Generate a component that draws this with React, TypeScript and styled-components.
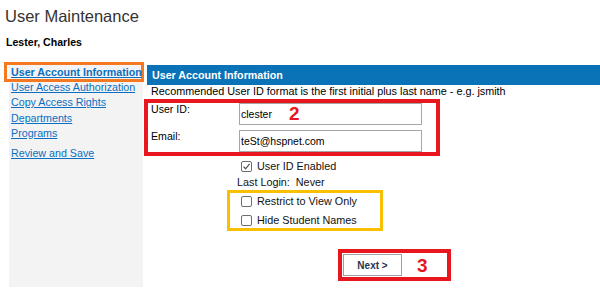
import React from "react";
import styled, { createGlobalStyle } from "styled-components";

const Global = createGlobalStyle`
  html, body { margin: 0; padding: 0; background: #fff; }
  body { font-family: "Liberation Sans", Arial, sans-serif; color: #000; }
`;

const Page = styled.div`
  display: flex;
  flex-direction: column;
`;

const Title = styled.h1`
  margin: 6px 0 0 5px;
  font-size: 16.5px;
  line-height: 20px;
  font-weight: normal;
  color: #333;
`;

const Name = styled.div`
  margin: 10px 0 0 6px;
  font-size: 10.6px;
  line-height: 13px;
  font-weight: bold;
`;

const Main = styled.div`
  display: flex;
  margin-top: 13px;
  min-height: 225px;
`;

const Sidebar = styled.nav`
  margin-left: 9px;
  width: 134px;
  background: #f3f3f3;
  display: flex;
  flex-direction: column;
`;

const NavLink = styled.a<{ $active?: boolean; $spaced?: boolean }>`
  display: block;
  color: #0b6fc1;
  text-decoration: underline;
  font-size: 10.7px;
  font-weight: ${(p) => (p.$active ? "bold" : "normal")};
  line-height: ${(p) => (p.$active ? "14px" : "15.3px")};
  padding-left: ${(p) => (p.$active ? "4px" : "2px")};
  margin: ${(p) => (p.$active ? "0 -1px -2px -5px" : p.$spaced ? "5px 0 0 0" : "0")};
  border: ${(p) => (p.$active ? "3px solid #f47920" : "none")};
  position: relative;
  white-space: nowrap;
  cursor: pointer;
`;

const Content = styled.section`
  flex: 1;
  margin: 3px 0 0 4px;
  display: flex;
  flex-direction: column;
  align-items: flex-start;
`;

const Header = styled.div`
  align-self: stretch;
  height: 20px;
  line-height: 20px;
  background: #0a73b8;
  color: #fff;
  font-weight: bold;
  font-size: 10.7px;
  padding-left: 5px;
`;

const Note = styled.div`
  font-size: 10.8px;
  line-height: 13px;
  padding-left: 4px;
`;

const Annot = styled.div<{ $color: string; $w?: number }>`
  position: relative;
  box-sizing: border-box;
  border: 4px solid ${(p) => p.$color};
  ${(p) => (p.$w ? `width: ${p.$w}px;` : "")}
`;

const FieldBox = styled(Annot)`
  margin: 1px 0 0 -3px;
  display: flex;
  flex-direction: column;
  gap: 5px;
`;

const FieldRow = styled.div`
  display: flex;
  align-items: flex-start;
`;

const Label = styled.label`
  width: 91px;
  box-sizing: border-box;
  padding-left: 3px;
  font-size: 10.6px;
  line-height: 13px;
`;

const Input = styled.input`
  box-sizing: border-box;
  width: 183px;
  height: 22px;
  border: 1px solid #a6a6a6;
  padding: 0 0 0 1px;
  font-family: "Liberation Sans", Arial, sans-serif;
  font-size: 10.5px;
  color: #000;
  outline: none;
`;

const Marker = styled.span<{ $left?: number; $top?: number }>`
  color: #e8171f;
  font-weight: bold;
  font-size: 19px;
  line-height: 19px;
  ${(p) =>
    p.$left !== undefined
      ? `position: absolute; left: ${p.$left}px; top: ${p.$top}px;`
      : ""}
`;

const Options = styled.div`
  margin-left: 90px;
  display: flex;
  flex-direction: column;
  align-items: flex-start;
`;

const CheckRow = styled.div<{ $mt?: number }>`
  display: flex;
  align-items: center;
  height: 16px;
  padding-left: 4px;
  margin-top: ${(p) => p.$mt ?? 0}px;
  font-size: 10.8px;
  color: #111;
  white-space: nowrap;
`;

const Box = styled.span`
  box-sizing: border-box;
  width: 11px;
  height: 11px;
  border: 1px solid #6d6d6d;
  border-radius: 2px;
  background: #fff;
  margin-right: 5px;
  display: flex;
  align-items: center;
  justify-content: center;
`;

const LastLogin = styled.div`
  margin-top: 2px;
  font-size: 10.8px;
  line-height: 13px;
  white-space: pre;
  color: #111;
`;

const OptBox = styled(Annot)`
  border-width: 3px;
  margin: 1px 0 0 -10px;
  padding-left: 7px;
  display: flex;
  flex-direction: column;
  gap: 3px;
`;

const Footer = styled(Annot)`
  margin: 18px 0 0 191px;
  padding: 1px 19px 1px 1px;
  display: flex;
  align-items: center;
  gap: 15px;
`;

const Button = styled.button`
  box-sizing: border-box;
  width: 59px;
  height: 22px;
  border: 1px solid #a0a0a0;
  background: #fff;
  font-family: "Liberation Sans", Arial, sans-serif;
  font-weight: bold;
  font-size: 10px;
  color: #1e3550;
  padding: 0;
  cursor: pointer;
`;

const Check = ({ checked }: { checked?: boolean }) => (
  <Box>
    {checked && (
      <svg width="9" height="9" viewBox="0 0 9 9">
        <path d="M1.5 4.6 L3.6 6.8 L7.6 1.8" fill="none" stroke="#5a5a5a" strokeWidth="1.3" />
      </svg>
    )}
  </Box>
);

export default function App() {
  return (
    <Page>
      <Global />
      <Title>User Maintenance</Title>
      <Name>Lester, Charles</Name>
      <Main>
        <Sidebar>
          <NavLink $active>User Account Information</NavLink>
          <NavLink>User Access Authorization</NavLink>
          <NavLink>Copy Access Rights</NavLink>
          <NavLink>Departments</NavLink>
          <NavLink>Programs</NavLink>
          <NavLink $spaced>Review and Save</NavLink>
        </Sidebar>
        <Content>
          <Header>User Account Information</Header>
          <Note>Recommended User ID format is the first initial plus last name - e.g. jsmith</Note>
          <FieldBox $color="#e8171f" $w={296}>
            <FieldRow>
              <Label>User ID:</Label>
              <Input defaultValue="clester" />
            </FieldRow>
            <FieldRow>
              <Label>Email:</Label>
              <Input defaultValue="teSt@hspnet.com" />
            </FieldRow>
            <Marker $left={141} $top={1}>2</Marker>
          </FieldBox>
          <Options>
            <CheckRow $mt={2}>
              <Check checked />
              User ID Enabled
            </CheckRow>
            <LastLogin>{"Last Login:  Never"}</LastLogin>
            <OptBox $color="#f8c000" $w={156}>
              <CheckRow>
                <Check />
                Restrict to View Only
              </CheckRow>
              <CheckRow>
                <Check />
                Hide Student Names
              </CheckRow>
            </OptBox>
          </Options>
          <Footer $color="#e8171f">
            <Button>Next &gt;</Button>
            <Marker>3</Marker>
          </Footer>
        </Content>
      </Main>
    </Page>
  );
}
